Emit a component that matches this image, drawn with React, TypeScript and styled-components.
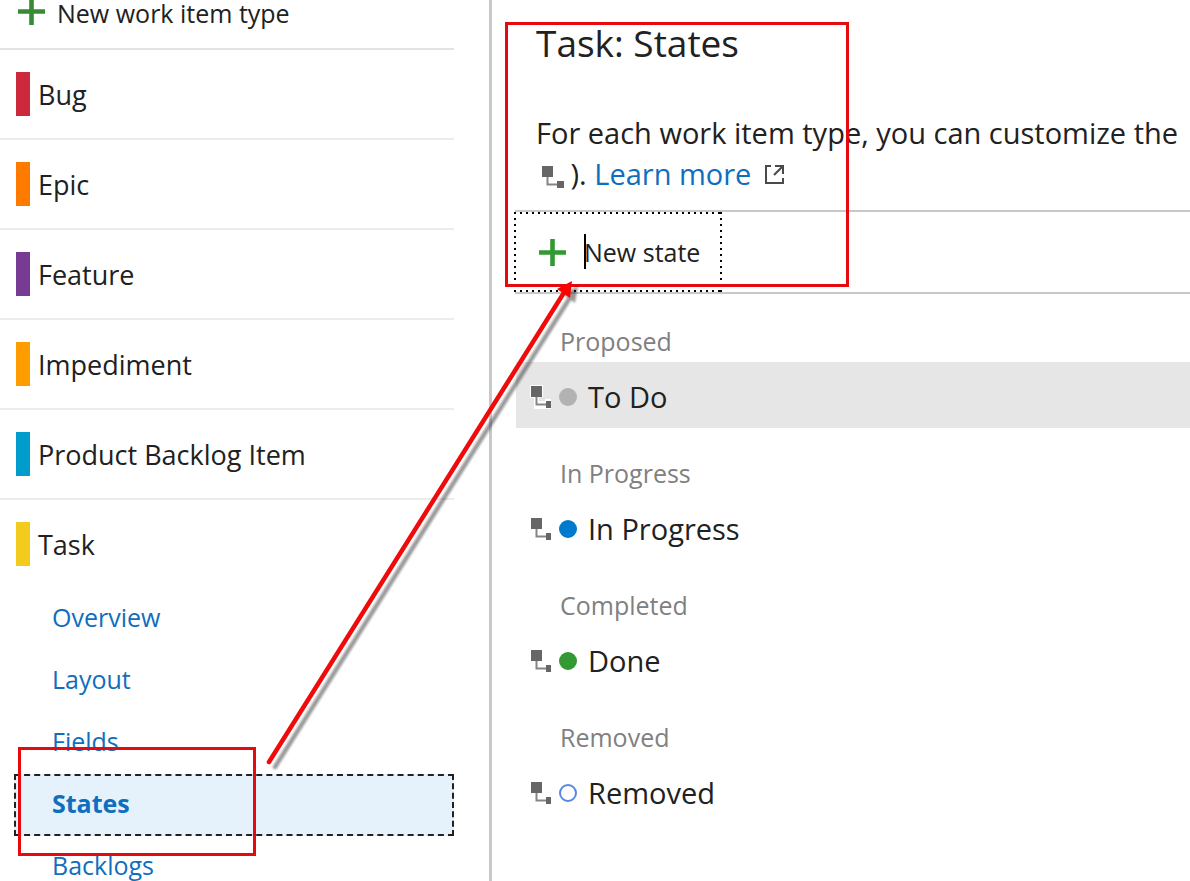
import React from "react";
import styled, { createGlobalStyle, css } from "styled-components";

const GlobalStyle = createGlobalStyle`
  *, *::before, *::after { box-sizing: border-box; }
  body {
    margin: 0;
    background: #fff;
    color: #212121;
    font-family: "Open Sans", "Noto Sans", sans-serif;
    font-size: 27px;
  }
  button { font-family: inherit; color: inherit; background: none; border: 0; padding: 0; margin: 0; cursor: pointer; }
  a { color: #106ebe; text-decoration: none; }
  h1, p, ul { margin: 0; padding: 0; font-weight: 400; }
  ul { list-style: none; }
`;

const Page = styled.div`
  position: relative;
  display: grid;
  grid-template-columns: 492px minmax(0, 1fr);
  height: 100vh;
  overflow: hidden;
`;

const Sidebar = styled.aside`
  border-right: 3px solid #c8c8c8;
  padding-right: 35px;
  overflow: hidden;
`;

const NewTypeButton = styled.button`
  display: flex;
  align-items: flex-start;
  gap: 12px;
  width: 100%;
  height: 50px;
  padding-left: 18px;
  border-bottom: 2px solid #e3e3e3;
  font-size: 25px;
  line-height: 26px;
`;

const TypeButton = styled.button<{ $open?: boolean }>`
  display: flex;
  align-items: center;
  gap: 8px;
  width: 100%;
  height: ${(p) => (p.$open ? 88 : 90)}px;
  padding-left: 16px;
  border-bottom: ${(p) => (p.$open ? 0 : 2)}px solid #ececec;
  font-size: 27px;
`;

const ColorBar = styled.span<{ $color: string }>`
  width: 14px;
  height: 44px;
  background: ${(p) => p.$color};
`;

const TypeName = styled.span`
  padding-top: 1px;
`;

const SubLink = styled.a<{ $active?: boolean }>`
  display: flex;
  align-items: center;
  height: 62px;
  margin-left: 14px;
  padding: 0 0 4px 36px;
  border: 2px dashed transparent;
  font-size: 25px;
  ${(p) =>
    p.$active &&
    css`
      background: #e5f2fb;
      border-color: #212121;
      font-weight: 700;
    `}
`;

const Main = styled.main`
  padding: 17px 0 0 23px;
  overflow: hidden;
`;

const Title = styled.h1`
  padding-left: 21px;
  font-size: 37px;
  line-height: 52px;
`;

const Description = styled.p`
  padding: 43px 0 16px 21px;
  font-size: 29px;
  line-height: 41px;
  white-space: nowrap;

  svg { vertical-align: middle; }
`;

const InlineIcon = styled.span`
  margin: 0 -2px 0 5px;
`;

const ExternalLink = styled.a`
  svg { margin: 0 0 6px 14px; }
`;

const Toolbar = styled.div`
  height: 84px;
  border-top: 2px solid #c8c8c8;
  border-bottom: 2px solid #c8c8c8;
`;

const dotsAcross = "repeating-linear-gradient(90deg, #000 0 2px, transparent 2px 6px)";
const dotsDown = "repeating-linear-gradient(180deg, #000 0 2px, transparent 2px 6px)";

const NewStateButton = styled.button`
  display: flex;
  align-items: center;
  gap: 18px;
  height: 80px;
  padding: 0 22px 0 25px;
  margin-left: -1px;
  background:
    ${dotsAcross} top / 100% 2px no-repeat,
    ${dotsAcross} bottom / 100% 2px no-repeat,
    ${dotsDown} left / 2px 100% no-repeat,
    ${dotsDown} right / 2px 100% no-repeat;
  font-size: 25px;
`;

const StateGroup = styled.section`
  padding-top: 24px;

  &:first-of-type { padding-top: 26px; }
`;

const GroupLabel = styled.h2`
  margin: 0;
  padding-left: 45px;
  font-size: 25px;
  font-weight: 400;
  line-height: 42px;
  color: #808080;
`;

const StateRow = styled.button<{ $selected?: boolean }>`
  display: flex;
  align-items: center;
  gap: 8px;
  width: 100%;
  height: 66px;
  padding: 3px 0 0 14px;
  margin-left: 1px;
  background: ${(p) => (p.$selected ? "#e6e6e6" : "transparent")};
  font-size: 29px;
`;

const StateDot = styled.span<{ $color: string; $hollow?: boolean }>`
  width: 18px;
  height: 18px;
  border: 2px solid ${(p) => p.$color};
  border-radius: 50%;
  background: ${(p) => (p.$hollow ? "#fff" : p.$color)};
`;

const StateName = styled.span`
  padding-left: 3px;
  line-height: 34px;
`;

const Highlight = styled.div<{ $x: number; $y: number; $w: number; $h: number }>`
  position: absolute;
  left: ${(p) => p.$x}px;
  top: ${(p) => p.$y}px;
  width: ${(p) => p.$w}px;
  height: ${(p) => p.$h}px;
  border: 3px solid #e60a0f;
  pointer-events: none;
`;

const ArrowLayer = styled.svg`
  position: absolute;
  left: 0;
  top: 0;
  pointer-events: none;
`;

const PointerCaret = styled.span`
  position: absolute;
  left: 584px;
  top: 234px;
  width: 2px;
  height: 35px;
  background: #000;
  pointer-events: none;
`;

const PlusIcon = ({ clipped, color }: { clipped?: boolean; color: string }) => (
  <svg width="27" height={clipped ? 25 : 27} viewBox={clipped ? "0 2 27 25" : "0 0 27 27"} aria-hidden="true">
    <path d="M13.5 0V27M0 13.5H27" stroke={color} strokeWidth="4.6" fill="none" />
  </svg>
);

const InheritedIcon = ({ full, halo }: { full?: boolean; halo?: boolean }) => (
  <svg width={full ? 24 : 21} height="24" viewBox={full ? "0 0 24 24" : "0 0 21 24"} aria-hidden="true">
    {halo && <path d="M0 0H13V12H9V16H15V14H21V24H4V13H0Z" fill="#fff" />}
    <path d="M6.5 12V19.5H17" fill="none" stroke="#858585" strokeWidth="2" />
    <path d="M1 1H12V12H1ZM16 16H23V23H16Z" fill="#666" />
  </svg>
);

const OpenIcon = () => (
  <svg width="19" height="19" viewBox="0 0 19 19" fill="none" stroke="#4a4a4a" strokeWidth="2" aria-hidden="true">
    <path d="M6 1H1V18H18V13M10 1H18V9M18 1L9 10" />
  </svg>
);

const workItemTypes = [
  { name: "Bug", color: "#cc293d" },
  { name: "Epic", color: "#ff7b00" },
  { name: "Feature", color: "#773b93" },
  { name: "Impediment", color: "#ff9d00" },
  { name: "Product Backlog Item", color: "#009ccc" },
  { name: "Task", color: "#f2cb1d", open: true },
];

const taskPages = ["Overview", "Layout", "Fields", "States", "Backlogs"];

const stateGroups = [
  { category: "Proposed", state: "To Do", color: "#b2b2b2", selected: true },
  { category: "In Progress", state: "In Progress", color: "#007acc" },
  { category: "Completed", state: "Done", color: "#339933" },
  { category: "Removed", state: "Removed", color: "#5688e0", hollow: true },
];

export default function App() {
  return (
    <Page>
      <GlobalStyle />
      <Sidebar>
        <NewTypeButton type="button">
          <PlusIcon clipped color="#388a34" />
          New work item type
        </NewTypeButton>
        <ul>
          {workItemTypes.map((type) => (
            <li key={type.name}>
              <TypeButton type="button" $open={type.open}>
                <ColorBar $color={type.color} />
                <TypeName>{type.name}</TypeName>
              </TypeButton>
            </li>
          ))}
        </ul>
        <nav aria-label="Task">
          {taskPages.map((page) => (
            <SubLink key={page} href={`#${page.toLowerCase()}`} $active={page === "States"}>
              {page}
            </SubLink>
          ))}
        </nav>
      </Sidebar>

      <Main>
        <Title>Task: States</Title>
        <Description>
          For each work item type, you can customize the
          <br />
          <InlineIcon>
            <InheritedIcon full />
          </InlineIcon>{" "}
          ).{" "}
          <ExternalLink href="#learn-more">
            Learn more
            <OpenIcon />
          </ExternalLink>
        </Description>
        <Toolbar>
          <NewStateButton type="button">
            <PlusIcon color="#339933" />
            New state
          </NewStateButton>
        </Toolbar>
        {stateGroups.map((group) => (
          <StateGroup key={group.category}>
            <GroupLabel>{group.category}</GroupLabel>
            <StateRow type="button" $selected={group.selected}>
              <InheritedIcon halo={group.selected} />
              <StateDot $color={group.color} $hollow={group.hollow} />
              <StateName>{group.state}</StateName>
            </StateRow>
          </StateGroup>
        ))}
      </Main>

      <PointerCaret />
      <Highlight $x={505} $y={22} $w={344} $h={265} />
      <Highlight $x={18} $y={747} $w={238} $h={109} />
      <ArrowLayer width="600" height="800" viewBox="0 0 600 800" aria-hidden="true">
        <defs>
          <filter id="soft" x="-10%" y="-10%" width="120%" height="120%">
            <feGaussianBlur stdDeviation="1.2" />
          </filter>
        </defs>
        <g transform="translate(6 5)" opacity="0.4" filter="url(#soft)">
          <path d="M269 762L565 291" stroke="#000" strokeWidth="4.5" strokeLinecap="round" />
          <path d="M572 281L557 289L569 298Z" fill="#000" />
        </g>
        <path d="M269 762L565 291" stroke="#f00a0a" strokeWidth="4.5" strokeLinecap="round" />
        <path d="M572 281L557 289L570 298Z" fill="#f00" />
      </ArrowLayer>
    </Page>
  );
}
